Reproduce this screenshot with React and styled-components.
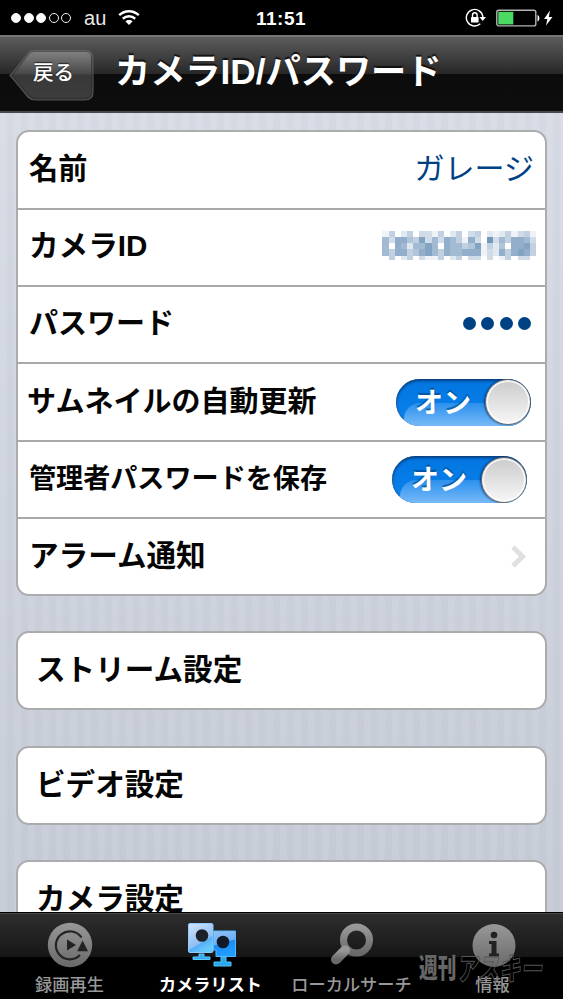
import React from 'react';
import styled, { createGlobalStyle } from 'styled-components';

const GlobalStyle = createGlobalStyle`
  * { box-sizing: border-box; }
  body {
    margin: 0;
    background: #000;
    font-family: "Liberation Sans", "Noto Sans CJK JP", sans-serif;
  }
`;

const Screen = styled.div`
  display: flex;
  flex-direction: column;
  width: 563px;
  height: 999px;
  overflow: hidden;
  position: relative;
`;

/* ---------- status bar ---------- */

const StatusBar = styled.header`
  display: grid;
  grid-template-columns: 1fr auto 1fr;
  align-items: center;
  flex: none;
  height: 35px;
  padding: 0 9px 0 11px;
  background: #000;
  color: #fff;
`;

const StatusGroup = styled.div`
  display: flex;
  align-items: center;
  justify-content: ${(p) => (p.$end ? 'flex-end' : 'flex-start')};
`;

const Signal = styled.div`
  display: flex;
  gap: 2.5px;
  margin-right: 13px;
`;

const SignalDot = styled.span`
  width: 10px;
  height: 10px;
  border-radius: 50%;
  border: 1px solid #f2f2f2;
  background: ${(p) => (p.$on ? '#fff' : 'transparent')};
`;

const Carrier = styled.span`
  font-size: 20px;
  line-height: 24px;
  letter-spacing: 0.2px;
  margin: 1px 11px 0 0;
  color: #e8e8e8;
`;

const Clock = styled.span`
  font-size: 19px;
  font-weight: 700;
  letter-spacing: 0.5px;
  line-height: 24px;
  margin: 2px 3px 0 0;
`;

const BatteryWrap = styled.span`
  display: flex;
  margin-left: 9px;
`;

/* ---------- navigation bar ---------- */

const NavBar = styled.nav`
  display: flex;
  align-items: center;
  flex: none;
  height: 78px;
  padding: 0 0 2px 9px;
  border-top: 2px solid #747474;
  border-bottom: 2px solid #47484c;
  background: linear-gradient(#5c5c5c 0, #272727 37px, #0c0c0c 37px, #0d0d0d 100%);
`;

const BackButton = styled.button`
  display: grid;
  flex: none;
  width: 85px;
  height: 54px;
  padding: 0;
  border: 0;
  background: none;
  margin-top: 3px;

  & > * { grid-area: 1 / 1; }
`;

const BackLabel = styled.span`
  padding: 9px 0 0 24px;
  text-align: left;
  font: 500 20.6px/28px "Noto Sans CJK JP", sans-serif;
  color: #fff;
  text-shadow: 0 -1px 1px #222;
`;

const Title = styled.h1`
  margin: 0 0 3px 21px;
  font: 700 35.2px/44px "Liberation Sans", "Noto Sans CJK JP", sans-serif;
  color: #fff;
  text-shadow: 0 -2px 1px #111;
  white-space: nowrap;
`;

/* ---------- settings list ---------- */

const Content = styled.main`
  display: flex;
  flex-direction: column;
  gap: 35.3px;
  flex: 1;
  min-height: 0;
  overflow: hidden;
  padding: 17px 16px 0;
  background:
    repeating-linear-gradient(90deg, rgba(255, 255, 255, 0.05) 0 7px, rgba(170, 186, 205, 0.07) 7px 14px),
    linear-gradient(#d7dbe5, #c5cad5);
`;

const Card = styled.section`
  flex: none;
  border: 2px solid #acacae;
  border-radius: 13px;
  background: #fff;
  overflow: hidden;
`;

const Row = styled.div`
  display: flex;
  align-items: center;
  justify-content: space-between;
  height: ${(p) => (p.$single ? 75 : 76)}px;
  padding: 0 ${(p) => p.$end || 13}px 0 ${(p) => p.$start || 11}px;

  & + & {
    height: 77.2px;
    border-top: 2px solid #a9a9a9;
  }
`;

const Label = styled.span`
  font: 700 ${(p) => p.$size || 29.6}px/40px "Liberation Sans", "Noto Sans CJK JP", sans-serif;
  color: #050505;
  white-space: nowrap;
  margin-bottom: ${(p) => p.$lift ?? 2}px;
`;

const Value = styled.span`
  font: 400 30px/40px "Noto Sans CJK JP", sans-serif;
  color: #004183;
  margin-bottom: 9px;
`;

const Mosaic = styled.div`
  display: grid;
  grid-template-columns: repeat(25, 6.15px);
  grid-template-rows: repeat(4, 6.15px) 4.7px;
  margin-bottom: 4px;
`;

const Pixel = styled.span`
  background: rgba(0, 65, 131, ${(p) => p.$level * 0.061});
`;

const Dots = styled.div`
  display: flex;
  gap: 5.5px;
  margin-bottom: 2px;
`;

const Dot = styled.span`
  width: 13px;
  height: 13px;
  border-radius: 50%;
  background: #004183;
`;

const SwitchTrack = styled.div`
  display: flex;
  align-items: center;
  justify-content: space-between;
  width: 135px;
  height: 47px;
  border-radius: 24px;
  padding-left: 19px;
  margin-top: 1px;
  box-shadow: inset 0 2px 3px rgba(0, 30, 80, 0.6), inset 0 0 0 1px rgba(60, 95, 140, 0.45);
  background: linear-gradient(#0376e0, #0a82ec);
  overflow: hidden;
  isolation: isolate;
  position: relative;

  &::after {
    content: "";
    position: absolute;
    z-index: -1;
    left: 8px;
    right: 8px;
    top: 24px;
    height: 30px;
    border-radius: 16px 16px 0 0;
    background: linear-gradient(#2b90ee, #74b8f6 22px);
  }
`;

const SwitchText = styled.span`
  font: 700 28px/34px "Noto Sans CJK JP", sans-serif;
  color: #fff;
  text-shadow: 0 -2px 1px rgba(0, 75, 140, 0.75);
  margin-bottom: 3px;
`;

const Knob = styled.span`
  width: 46px;
  height: 46px;
  border-radius: 50%;
  border: 1px solid #686868;
  background: linear-gradient(#cbcbcb, #f7f7f7);
  box-shadow: inset 0 0 0 2px rgba(255, 255, 255, 0.75), -1px 0 2px rgba(0, 35, 90, 0.7);
`;

/* ---------- tab bar ---------- */

const TabBar = styled.footer`
  display: grid;
  grid-template-columns: repeat(4, 141px);
  flex: none;
  height: 87px;
  border-top: 1px solid #000;
  background: linear-gradient(#474747 0 1px, #2e2e2e 1px, #161616 44px, #000 44px);
`;

const Tab = styled.div`
  display: flex;
  flex-direction: column;
  align-items: center;
  padding: 7px 2px 0 0;

  & > svg { flex: none; }
`;

const TabLabel = styled.span`
  font: ${(p) => (p.$active ? 700 : 500)} 17.2px/24px "Noto Sans CJK JP", sans-serif;
  color: ${(p) => (p.$active ? '#fff' : '#999')};
  white-space: nowrap;
  margin-top: 2px;
`;

const Watermark = styled.div`
  position: absolute;
  left: 419px;
  top: 948px;
  display: flex;
  width: 184px;
  white-space: nowrap;
  transform: scaleX(0.69);
  transform-origin: 0 0;
  font: 900 27px/38px "Noto Sans CJK JP", sans-serif;
  color: #666;
`;

const WatermarkOutline = styled.span`
  font-size: 31px;
  color: transparent;
  -webkit-text-stroke: 1px #555;
  transform: skewX(-10deg);
  margin-left: 3px;
`;

/* ---------- drawings ---------- */

const Wifi = () => (
  <svg width="22" height="17" viewBox="0 0 22 17" fill="none" stroke="#fff" strokeWidth="2.5">
    <path d="M1.2 6.1C6.8.8 15.2.8 20.8 6.1" />
    <path d="M4.8 9.7c3.6-3.2 8.8-3.2 12.4 0" />
    <path d="M7.4 12.3c2-1.8 5.2-1.8 7.2 0L11 16z" fill="#fff" stroke="none" />
  </svg>
);

const RotationLock = () => (
  <svg width="22" height="20" viewBox="0 0 22 20" fill="none" stroke="#fff" strokeWidth="1.4">
    <path d="M15.3 15.8A8.3 8.3 0 1 1 17.9 9" />
    <path d="M14.4 9h6.6l-3.3 4z" fill="#fff" stroke="none" />
    <rect x="6" y="9" width="7.6" height="5.6" rx=".7" fill="#fff" stroke="none" />
    <path d="M7.5 9V7a2.3 2.3 0 0 1 4.6 0v2" />
  </svg>
);

const Battery = () => (
  <svg width="58" height="20" viewBox="0 0 58 20">
    <rect x=".8" y="2.3" width="39" height="15.6" rx="2" fill="none" stroke="#b4b4b4" strokeWidth="1.4" />
    <rect x="2.3" y="3.8" width="15" height="12.6" fill="#4bd964" />
    <path d="M41.5 7c2.5 1 2.5 5.5 0 6.5z" fill="#fff" />
    <path d="M54 2.5 48 11h3.4L50 17.5 56.5 9h-3.7z" fill="#fff" />
  </svg>
);

const BackShape = () => (
  <svg width="85" height="54" viewBox="0 0 85 54">
    <defs>
      <linearGradient id="back" x2="0" y2="1">
        <stop offset="0" stopColor="#858585" />
        <stop offset=".48" stopColor="#484848" />
        <stop offset=".5" stopColor="#383838" />
        <stop offset="1" stopColor="#3d3d3d" />
      </linearGradient>
    </defs>
    <path
      d="M1 27.5C8 20 13 12 19 5c2-2.5 4-3 7-3h50c5 0 8 3 8 8v34c0 5-3 8-8 8H26c-3 0-5-1-7-3C13 42 8 35 1 27.5Z"
      fill="url(#back)" stroke="#505050" strokeWidth="1.2"
    />
    <path
      d="M3 27.5C9 21 14 13 20 6c2-2 4-2.7 6-2.7h50c4 0 6.6 3 6.6 7v33c0 4-2.6 7-6.6 7H26c-2 0-4-1-6-3C14 41 9 34 3 27.5Z"
      fill="none" stroke="#292929" strokeOpacity=".65"
    />
  </svg>
);

const Chevron = () => (
  <svg width="17" height="24" viewBox="0 0 17 24" fill="none" stroke="#dfe0e2" strokeWidth="5">
    <path d="M2 3 11.5 12.5 2 22" />
  </svg>
);

const GreyGradient = ({ id }) => (
  <linearGradient id={id} x2="0" y2="1">
    <stop offset="0" stopColor="#989898" />
    <stop offset="1" stopColor="#696969" />
  </linearGradient>
);

const PlaybackIcon = () => (
  <svg width="52" height="50" viewBox="0 0 52 50">
    <defs><GreyGradient id="play" /></defs>
    <circle cx="26" cy="25" r="22.2" fill="url(#play)" />
    <path d="M37.5 17.5A14 14 0 1 0 36 35" fill="none" stroke="#242424" strokeWidth="2.2" />
    <path d="m38.6 20.5 5.4 10.8H33.2z" fill="#222" />
    <path d="m23 19.5 9 5.5-9 5.5z" fill="#222" />
  </svg>
);

const CamerasIcon = () => (
  <svg width="52" height="50" viewBox="0 0 52 50">
    <defs>
      <linearGradient id="camA" x2=".5" y2="1">
        <stop offset="0" stopColor="#d4e5fa" />
        <stop offset=".73" stopColor="#8fbdf0" />
        <stop offset=".75" stopColor="#55aef5" />
        <stop offset="1" stopColor="#67c8fc" />
      </linearGradient>
      <linearGradient id="camB" x1=".1" x2=".35" y2="1">
        <stop offset="0" stopColor="#8fc0f5" />
        <stop offset=".5" stopColor="#70aff4" />
        <stop offset=".53" stopColor="#188df5" />
        <stop offset="1" stopColor="#239cff" />
      </linearGradient>
    </defs>
    <path d="M14 34h5v3h6v2.5H8V37h6z" fill="#39a9ef" stroke="#58cbff" />
    <rect x="3.5" y="3.5" width="24.5" height="29" rx="1.5" fill="url(#camA)" stroke="#8fcaff" />
    <path d="M36 37h5v5h5v4H29v-4h7z" fill="#2ba6e8" stroke="#4fc3ff" />
    <path d="M28.5 11h22v25.5H31V30h-2.5z" fill="url(#camB)" stroke="#54b9ff" />
    <circle cx="17" cy="15.5" r="6.3" fill="#1b2029" />
    <circle cx="38" cy="22" r="6.3" fill="#101a2a" />
  </svg>
);

const SearchIcon = () => (
  <svg width="52" height="50" viewBox="0 0 52 50" fill="none" stroke="url(#search)">
    <defs><GreyGradient id="search" /></defs>
    <circle cx="30.5" cy="20" r="13" strokeWidth="7" />
    <path d="m19 30.5-9 9" strokeWidth="10" strokeLinecap="round" />
  </svg>
);

const InfoIcon = () => (
  <svg width="52" height="50" viewBox="0 0 52 50">
    <defs><GreyGradient id="info" /></defs>
    <circle cx="27" cy="25.5" r="21.5" fill="url(#info)" />
    <circle cx="27" cy="15" r="3.3" fill="#222" />
    <path d="M22 21h7.5v12.5H32v3H22v-3h2.5V24H22z" fill="#222" />
  </svg>
);

const mosaicRows = [
  '1402403314024034021241341',
  '6377548363764173093647763',
  '6076266860766458142507784',
  '6477457864766777132747874',
  '0402403114024033030140330',
];

const Switch = () => (
  <SwitchTrack role="switch" aria-checked="true">
    <SwitchText>オン</SwitchText>
    <Knob />
  </SwitchTrack>
);

export default function App() {
  return (
    <Screen>
      <GlobalStyle />
      <StatusBar>
        <StatusGroup>
          <Signal>
            {[true, true, true, false, false].map((on, i) => <SignalDot key={i} $on={on} />)}
          </Signal>
          <Carrier>au</Carrier>
          <Wifi />
        </StatusGroup>
        <Clock>11:51</Clock>
        <StatusGroup $end>
          <RotationLock />
          <BatteryWrap><Battery /></BatteryWrap>
        </StatusGroup>
      </StatusBar>

      <NavBar>
        <BackButton>
          <BackShape />
          <BackLabel>戻る</BackLabel>
        </BackButton>
        <Title>カメラID/パスワード</Title>
      </NavBar>

      <Content>
        <Card>
          <Row $end={11}><Label $size={29.2}>名前</Label><Value>ガレージ</Value></Row>
          <Row $end={9}>
            <Label $lift={3}>カメラID</Label>
            <Mosaic>
              {mosaicRows.join('').split('').map((n, i) => <Pixel key={i} $level={Number(n)} />)}
            </Mosaic>
          </Row>
          <Row $end={14}>
            <Label $size={29}>パスワード</Label>
            <Dots><Dot /><Dot /><Dot /><Dot /></Dots>
          </Row>
          <Row $end={14} $start={9}><Label $size={29} $lift={0}>サムネイルの自動更新</Label><Switch /></Row>
          <Row $end={18}><Label $size={27.1} $lift={1}>管理者パスワードを保存</Label><Switch /></Row>
          <Row $end={17}><Label $lift={0}>アラーム通知</Label><Chevron /></Row>
        </Card>
        {['ストリーム設定', 'ビデオ設定', 'カメラ設定'].map((name) => (
          <Card key={name}><Row $single $start={18}><Label $lift={1}>{name}</Label></Row></Card>
        ))}
      </Content>

      <TabBar>
        <Tab><PlaybackIcon /><TabLabel>録画再生</TabLabel></Tab>
        <Tab><CamerasIcon /><TabLabel $active>カメラリスト</TabLabel></Tab>
        <Tab><SearchIcon /><TabLabel>ローカルサーチ</TabLabel></Tab>
        <Tab><InfoIcon /><TabLabel>情報</TabLabel></Tab>
      </TabBar>
      <Watermark>週刊<WatermarkOutline>アスキー</WatermarkOutline></Watermark>
    </Screen>
  );
}
